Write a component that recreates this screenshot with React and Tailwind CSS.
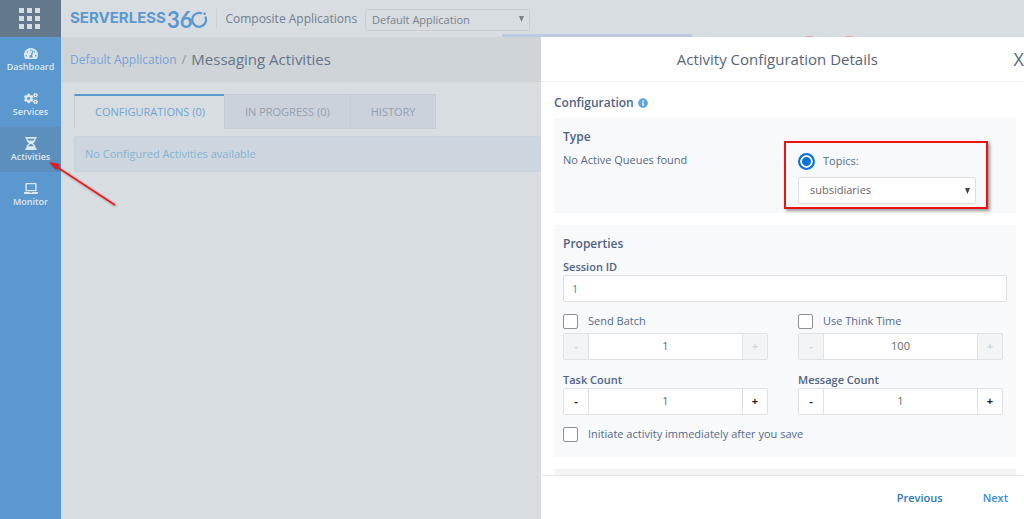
import React, { useState } from 'react';
import { FaCogs, FaInfoCircle, FaLaptop, FaTachometerAlt } from 'react-icons/fa';

const HourglassIcon = ({ className }) => (
    <svg viewBox="0 0 12 14" className={className} fill="currentColor">
        <path fillRule="evenodd" d="M0 0h12v2h-1c0 2.400-1.200 4-3 5 1.800 1 3 2.600 3 5h1v2H0v-2h1c0-2.400 1.200-4 3-5-1.800-1-3-2.600-3-5H0zM2.300 2c.1.700.2 1.200.4 1.700h6.600c.2-.5.3-1 .4-1.700zM6 7.300c-1.300.5-2.300 1.400-3 2.700h6c-.7-1.300-1.700-2.200-3-2.700z" />
    </svg>
);

const navItems = [
    { label: 'Dashboard', icon: FaTachometerAlt },
    { label: 'Services', icon: FaCogs },
    { label: 'Activities', icon: HourglassIcon, active: true },
    { label: 'Monitor', icon: FaLaptop },
];

const Caret = () => (
    <svg viewBox="0 0 6 6" preserveAspectRatio="none" className="absolute right-1.5 top-1/2 h-1.5 w-[5px] -translate-y-1/2 pointer-events-none" fill="currentColor">
        <path d="M0 0h6L3 6z" />
    </svg>
);

const Sidebar = () => (
    <aside className="w-[61px] shrink-0 flex flex-col bg-[#5a98cf] text-[#dce8f2]">
        <button aria-label="All apps" className="h-[37px] bg-[#64788c] flex items-center justify-center pr-0.5">
            <svg viewBox="0 0 21 21" className="h-[21px] w-[21px]" fill="#d8dde1">
                {[0, 8, 16].map((y) => [0, 8, 16].map((x) => (
                    <rect key={`${x}-${y}`} x={x} y={y} width="5" height="5" />
                )))}
            </svg>
        </button>
        <nav className="flex flex-col">
            {navItems.map(({ label, icon: Icon, active }) => (
                <a
                    key={label}
                    href="#"
                    className={`h-[45px] flex flex-col items-center pt-2.5 text-[9px] leading-3 font-semibold ${active ? 'bg-[#5d8fbd]' : ''}`}
                >
                    <Icon className="h-[13px] w-[14px] mb-px" />
                    {label}
                </a>
            ))}
        </nav>
    </aside>
);

const Logo = () => (
    <div className="flex items-center text-[#5a98cf]">
        <span className="font-[Inter] font-bold text-[15px] leading-5 pb-0.5">SERVERLESS</span>
        <span className="font-[Lato] font-bold text-[22px] leading-6 pt-0.5 ml-px">36</span>
        <svg viewBox="0 0 17 17" className="h-[17px] w-[17px] mt-0.5 -ml-px shrink-0" fill="none" stroke="currentColor" strokeWidth="2.200">
            <path d="M11 2.600A6.900 6.900 0 1 0 14.200 5.600" />
            <circle cx="13.600" cy="2.700" r="1.300" fill="currentColor" stroke="none" />
        </svg>
    </div>
);

const Header = () => (
    <header className="h-[37px] flex items-center pl-[9px] text-[#72808f]">
        <Logo />
        <div className="h-5 w-px bg-[#ccd2d7] mx-2" />
        <label htmlFor="app" className="text-[12px]">Composite Applications</label>
        <div className="relative ml-2 text-[#77818a]">
            <select id="app" className="appearance-none w-[165px] h-[22px] pl-1.5 text-[11px] rounded-xs border border-[#c8ced2]">
                <option>Default Application</option>
            </select>
            <Caret />
        </div>
    </header>
);

const tabs = ['CONFIGURATIONS (0)', 'IN PROGRESS (0)', 'HISTORY'];

const Activities = () => (
    <main>
        <div className="h-[45px] bg-[#cfd4d8] flex items-center pl-[9px] gap-[5px]">
            <a href="#" className="text-[12px] text-[#7aa3d4]">Default Application</a>
            <span className="text-[13px] text-[#8d99a5]">/</span>
            <h1 className="text-[15px] text-[#65748a]">Messaging Activities</h1>
        </div>
        <div className="pl-[13px] pt-3">
            <div role="tablist" className="flex h-[35px]">
                {tabs.map((tab, i) => (
                    <button
                        key={tab}
                        role="tab"
                        aria-selected={i === 0}
                        className={i === 0
                            ? 'px-5 text-[11px] text-[#6fa6d6] border-t-2 border-t-[#5a98cf] border-l border-l-[#c8cfd6]'
                            : 'px-5 pt-0.5 text-[11px] text-[#929fb0] bg-[#cbd2db] border border-[#c4ccd5] -ml-px'}
                    >
                        {tab}
                    </button>
                ))}
            </div>
            <div className="mt-[7px] h-9 flex items-center pl-2.5 text-[11px] text-[#85b3d0] bg-[#cdd6df] border border-[#c5d3de] rounded-xs">
                No Configured Activities available
            </div>
        </div>
    </main>
);

const Card = ({ title, children }) => (
    <section className="px-[9px]">
        <h3 className="text-[12px] leading-4 font-semibold text-[#4f6384]">{title}</h3>
        {children}
    </section>
);

const Checkbox = ({ label }) => (
    <label className="flex items-center gap-2.5 h-[15px]">
        <input type="checkbox" className="appearance-none h-[15px] w-[15px] bg-white border border-[#8d8f93] rounded-xs" />
        {label}
    </label>
);

const Stepper = ({ label, initial, disabled }) => {
    const [value, setValue] = useState(initial);
    const side = disabled ? 'w-6 bg-[#f3f4f5] text-[#cbd7e5] font-bold' : 'w-6 bg-white text-[#222] font-bold';

    return (
        <div className="flex h-[27px] border border-[#e0e1e3] rounded-xs overflow-hidden">
            <button disabled={disabled} aria-label={`Decrease ${label}`} className={side} onClick={() => setValue(value - 1)}>-</button>
            <input
                aria-label={label}
                value={value}
                onChange={(e) => setValue(Number(e.target.value) || 0)}
                className="min-w-0 flex-1 bg-white border-x border-[#e0e1e3] text-center text-[#666]"
            />
            <button disabled={disabled} aria-label={`Increase ${label}`} className={side} onClick={() => setValue(value + 1)}>+</button>
        </div>
    );
};

const ConfigurationPanel = () => (
    <div role="dialog" aria-label="Activity Configuration Details" className="absolute top-[37px] right-0 bottom-0 w-[483px] flex flex-col bg-white text-[11px] text-[#566a89]">
        <div className="h-[45px] shrink-0 flex items-center border-b border-[#eceef0]">
            <h2 className="flex-1 text-center text-[15px] text-[#56657a]">Activity Configuration Details</h2>
            <button aria-label="Close" className="text-[18px] text-[#56657a]">X</button>
        </div>

        <div className="flex-1 min-h-0 overflow-hidden pl-[13px] pr-2">
            <div className="flex items-center gap-1 pt-[13px] pb-[7px] text-[12px] leading-4 font-semibold text-[#4f6384]">
                Configuration
                <FaInfoCircle className="h-2.5 w-2.5 text-[#5fa5db]" />
            </div>

            <div className="flex flex-col gap-3">
                <div className="pt-[11px] pb-[9px] bg-[#f8f9fb]">
                    <Card title="Type">
                        <div className="grid grid-cols-2 gap-[30px] pr-1">
                            <p className="pt-[7px] leading-4">No Active Queues found</p>
                            <div className="relative pt-2">
                                <label className="flex items-center gap-2 h-4">
                                    <input type="radio" name="type" defaultChecked className="appearance-none h-[17px] w-[17px] rounded-full border-2 border-[#0a73d9] bg-[#0a73d9] shadow-[inset_0_0_0_2px_white]" />
                                    Topics:
                                </label>
                                <div className="relative mt-2 w-[178px] text-[#444]">
                                    <select aria-label="Topic" className="appearance-none w-full h-[27px] pl-[11px] bg-white text-[#666] border border-[#dddfe2] rounded-xs">
                                        <option>subsidiaries</option>
                                    </select>
                                    <Caret />
                                </div>
                                <div className="absolute -top-1 -left-3.5 w-[204px] h-[68px] border-2 border-[#ee1111] shadow-[2px_2px_3px_rgba(0,0,0,0.4)] pointer-events-none" />
                            </div>
                        </div>
                    </Card>
                </div>

                <div className="pt-[11px] pb-[15px] bg-[#f8f9fb]">
                    <Card title="Properties">
                        <label className="block mt-[7px] leading-4 font-semibold text-[#4f6384]" htmlFor="session">Session ID</label>
                        <input id="session" defaultValue="1" className="block w-full h-[27px] px-2 bg-white text-[#777] border border-[#dddfe2] rounded-xs" />
                        <div className="grid grid-cols-2 gap-x-[30px] pr-1 mt-3">
                            <div className="flex flex-col gap-1">
                                <Checkbox label="Send Batch" />
                                <Stepper label="Batch size" initial={1} disabled />
                            </div>
                            <div className="flex flex-col gap-1">
                                <Checkbox label="Use Think Time" />
                                <Stepper label="Think time" initial={100} disabled />
                            </div>
                            <div className="mt-3">
                                <p className="leading-4 font-semibold text-[#4f6384]">Task Count</p>
                                <Stepper label="Task Count" initial={1} />
                            </div>
                            <div className="mt-3">
                                <p className="leading-4 font-semibold text-[#4f6384]">Message Count</p>
                                <Stepper label="Message Count" initial={1} />
                            </div>
                        </div>
                        <div className="mt-3">
                            <Checkbox label="Initiate activity immediately after you save" />
                        </div>
                    </Card>
                </div>

                <div className="h-10 bg-[#f5f5f6]" />
            </div>
        </div>

        <footer className="h-11 shrink-0 flex items-center justify-end gap-10 pr-4 pt-0.5 border-t border-[#e3e5e7] font-semibold">
            <button className="text-[#2f77b8]">Previous</button>
            <button className="text-[#3a8ddb]">Next</button>
        </footer>
    </div>
);

const App = () => {
    return (
        <div className="relative h-screen overflow-hidden flex bg-[#d8dde1] font-['Open_Sans',sans-serif]">
            <Sidebar />
            <div className="flex-1 min-w-0">
                <Header />
                <Activities />
            </div>

            {/* tab strip and badges peeking out above the panel */}
            <div className="absolute left-[502px] top-[34px] w-[190px] h-[3px] bg-[#bccadf]" />
            <div className="absolute left-[805px] top-9 w-2 h-px rounded-full bg-[#e3a5a5]" />
            <div className="absolute left-[845px] top-9 w-2 h-px rounded-full bg-[#e3a5a5]" />

            <ConfigurationPanel />

            <svg viewBox="0 0 72 48" className="absolute left-[48px] top-[160px] w-[72px] h-12 pointer-events-none drop-shadow-[1px_1px_1px_rgba(0,0,0,0.35)]">
                <path d="M6 5L67 45" stroke="#f01616" strokeWidth="1.500" />
                <path d="M1 2l10.500 2-3.500 5.500z" fill="#f01616" />
            </svg>
        </div>
    );
};

export default App;
